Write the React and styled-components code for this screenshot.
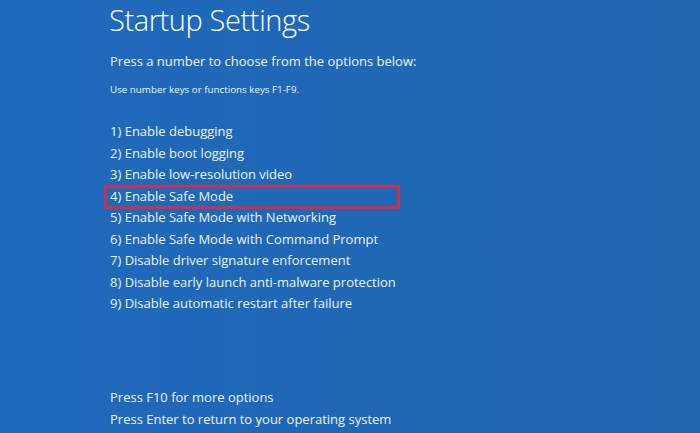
import React from 'react';
import styled, { createGlobalStyle } from 'styled-components';

const GlobalStyle = createGlobalStyle`
  html, body {
    margin: 0;
    padding: 0;
    height: 100%;
  }
  #root {
    height: 100%;
  }
`;

const Screen = styled.div`
  display: flex;
  flex-direction: column;
  box-sizing: border-box;
  height: 433px;
  padding: 0 0 3px 109px;
  background: linear-gradient(90deg, #1f69bd 0%, #2067b4 60%, #2066af 100%);
  color: #eef3fa;
  font-family: 'Open Sans', 'Liberation Sans', sans-serif;
  overflow: hidden;
`;

const Title = styled.h1`
  margin: 0;
  padding-top: 1px;
  font-size: 29px;
  font-weight: 300;
  letter-spacing: -0.4px;
  line-height: 38px;
  color: #fff;
`;

const Prompt = styled.p`
  margin: 12px 0 0 1px;
  font-size: 13px;
  line-height: 20px;
`;

const Hint = styled.p`
  margin: 12px 0 0 1px;
  font-size: 9.8px;
  line-height: 14px;
`;

const OptionList = styled.ol`
  list-style: none;
  margin: 24px 0 0 1px;
  padding: 0;
`;

const Option = styled.li`
  position: relative;
  width: 287px;
  height: 21.5px;
  font-size: 13px;
  line-height: 21.5px;
  white-space: nowrap;

  &::after {
    content: '';
    display: ${({ $selected }) => ($selected ? 'block' : 'none')};
    position: absolute;
    top: -1px;
    bottom: -2px;
    left: -6px;
    right: -3px;
    border: 3px solid #c8324e;
  }
`;

const Spacer = styled.div`
  flex: 1;
`;

const Footer = styled.div`
  margin-left: 1px;
  font-size: 13px;
  line-height: 22px;
`;

const options = [
  'Enable debugging',
  'Enable boot logging',
  'Enable low-resolution video',
  'Enable Safe Mode',
  'Enable Safe Mode with Networking',
  'Enable Safe Mode with Command Prompt',
  'Disable driver signature enforcement',
  'Disable early launch anti-malware protection',
  'Disable automatic restart after failure',
];

export default function App() {
  return (
    <>
      <GlobalStyle />
      <Screen>
        <Title>Startup Settings</Title>
        <Prompt>Press a number to choose from the options below:</Prompt>
        <Hint>Use number keys or functions keys F1-F9.</Hint>
        <OptionList>
          {options.map((label, i) => (
            <Option key={label} $selected={i === 3}>
              {i + 1}) {label}
            </Option>
          ))}
        </OptionList>
        <Spacer />
        <Footer>
          <div>Press F10 for more options</div>
          <div>Press Enter to return to your operating system</div>
        </Footer>
      </Screen>
    </>
  );
}
